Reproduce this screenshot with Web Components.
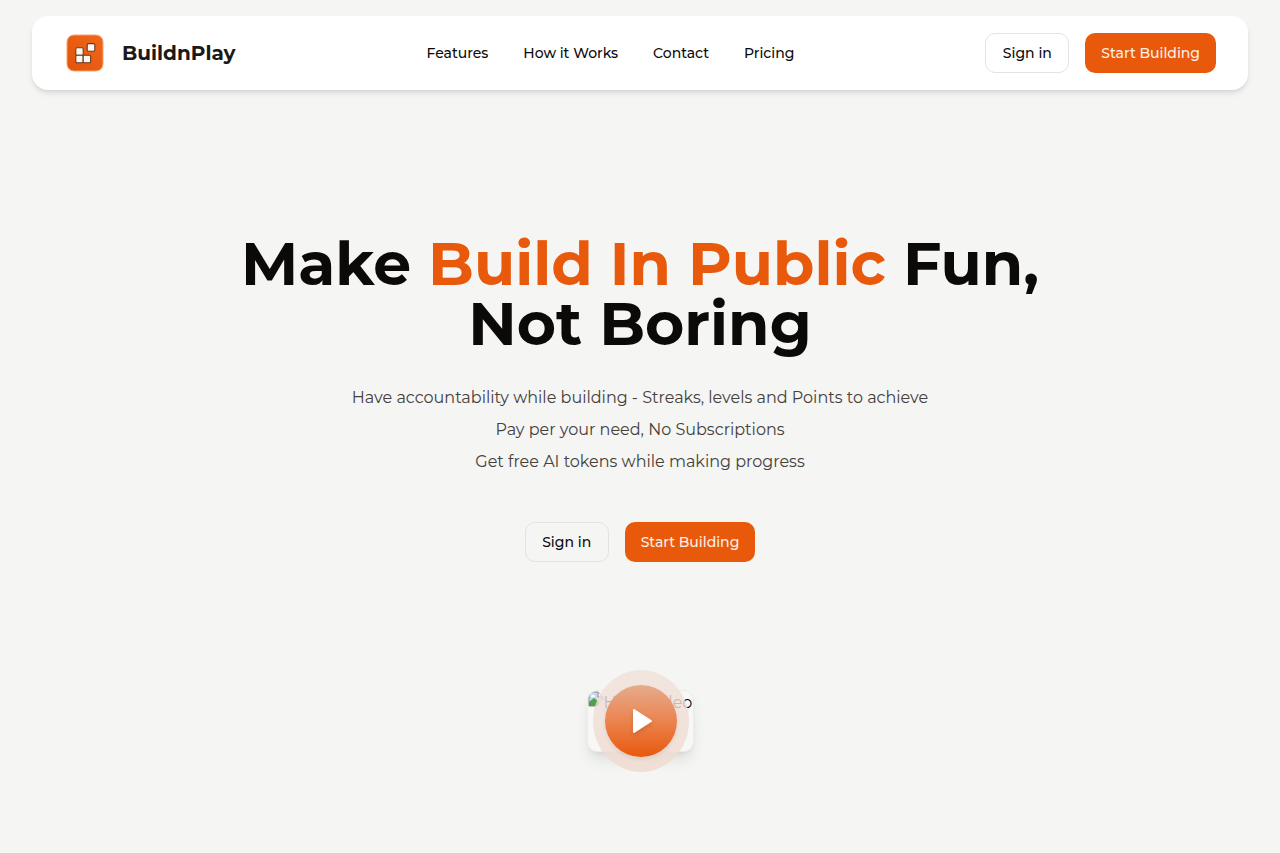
<!DOCTYPE html>
<html lang="en">
<head>
<meta charset="utf-8">
<meta name="viewport" content="width=device-width, initial-scale=1">
<title>BuildnPlay</title>
<style>
  body {
    margin: 0;
    background: #f5f5f3;
    color: #0c0a09;
    font-family: Montserrat, Inter, "Open Sans", sans-serif;
    font-size: 16px;
    line-height: 24px;
    --primary: #e8590c;
    --border: #e4e3e2;
  }
</style>
</head>
<body>
<landing-page></landing-page>

<template id="landing-page">
  <style>
    :host { display: block; }
  </style>
  <site-header>
    <nav-link href="#features">Features</nav-link>
    <nav-link href="#how">How it Works</nav-link>
    <nav-link href="#contact">Contact</nav-link>
    <nav-link href="#pricing">Pricing</nav-link>
  </site-header>
  <main>
    <hero-section></hero-section>
  </main>
</template>

<template id="site-header">
  <style>
    :host { display: block; padding: 16px 32px 0; }
    header {
      display: flex; align-items: center; justify-content: space-between;
      padding: 16px 32px; background: #fff; border-radius: 16px;
      box-shadow: 0 4px 6px -1px rgb(0 0 0 / .1), 0 2px 4px -2px rgb(0 0 0 / .1);
    }
    nav { display: flex; gap: 35px; }
  </style>
  <header>
    <brand-logo></brand-logo>
    <nav aria-label="Main"><slot></slot></nav>
    <action-buttons></action-buttons>
  </header>
</template>

<template id="brand-logo">
  <style>
    :host { display: block; }
    a { display: flex; align-items: center; gap: 16px; color: #1c1917; text-decoration: none; font-size: 20px; line-height: 28px; font-weight: 700; }
    svg { display: block; width: 42px; height: 42px; }
  </style>
  <a href="#home">
    <svg viewBox="0 0 42 42" aria-hidden="true">
      <defs><linearGradient id="g" x1="1" y1="0" x2="0" y2="1"><stop offset="0" stop-color="#f0681a"/><stop offset="1" stop-color="#e2530b"/></linearGradient></defs>
      <rect x="3" y="3" width="36" height="36" rx="7" fill="url(#g)" stroke="#f9a36c"/>
      <g fill="#fbf7f2" stroke="#71371a" stroke-width="1.1">
        <rect x="11.8" y="15.8" width="7.4" height="7.5" rx="1"/>
        <rect x="11.8" y="23.3" width="7.4" height="7.4" rx="1"/>
        <rect x="19.2" y="23.3" width="7.4" height="7.4" rx="1"/>
        <rect x="23.2" y="11.6" width="7.6" height="7.6" rx="1.2"/>
      </g>
    </svg>
    <span>BuildnPlay</span>
  </a>
</template>

<template id="nav-link">
  <style>
    :host { display: block; }
    a { display: block; color: #0c0a09; text-decoration: none; font-size: 14px; line-height: 20px; font-weight: 500; white-space: nowrap; }
  </style>
  <a><slot></slot></a>
</template>

<template id="action-buttons">
  <style>
    :host { display: flex; gap: 16px; justify-content: center; }
  </style>
  <app-button>Sign in</app-button>
  <app-button variant="primary">Start Building</app-button>
</template>

<template id="app-button">
  <style>
    :host { display: block; }
    button {
      box-sizing: border-box; min-width: 84px; height: 40px; padding: 0 16px; cursor: pointer;
      font: inherit; font-size: 14px; line-height: 20px; font-weight: 500; color: #0c0a09;
      background: transparent; border: 1px solid var(--border); border-radius: 10px; white-space: nowrap;
    }
    :host([variant="primary"]) button { background: var(--primary); border: 0; color: #fdf0e6; }
  </style>
  <button type="button"><slot></slot></button>
</template>

<template id="hero-section">
  <style>
    :host { display: flex; flex-direction: column; align-items: center; padding: 144px 32px 96px; text-align: center; }
    h1 { margin: 0; max-width: 900px; font-size: 60px; line-height: 60px; font-weight: 700; }
    em { font-style: normal; color: var(--primary); }
    .copy { margin: 28px 0 44px; color: #44403c; font-size: 16px; line-height: 32px; }
    p { margin: 0; }
    hero-video { margin-top: 128px; }
  </style>
  <h1>Make <em>Build In Public</em> Fun,<br>Not Boring</h1>
  <div class="copy">
    <p>Have accountability while building - Streaks, levels and Points to achieve</p>
    <p>Pay per your need, No Subscriptions</p>
    <p>Get free AI tokens while making progress</p>
  </div>
  <action-buttons></action-buttons>
  <hero-video></hero-video>
</template>

<template id="hero-video">
  <style>
    :host { display: block; position: relative; }
    .poster {
      box-sizing: border-box; display: flex; align-items: flex-start; width: 107px; height: 62px; overflow: hidden;
      border: 1px solid #ececeb; border-radius: 10px; background: #f7f7f6; white-space: nowrap;
      box-shadow: 0 10px 15px -3px rgb(0 0 0 / .1), 0 4px 6px -4px rgb(0 0 0 / .1);
    }
    .poster svg { flex: none; width: 16px; height: 16px; }
    button {
      position: absolute; inset: -20px 5px -20px 6px; display: grid; place-items: center; padding: 0; cursor: pointer;
      border: 0; border-radius: 50%; background: linear-gradient(rgb(240 226 218 / .8), rgb(240 219 208 / .85));
    }
    .disc {
      display: grid; place-items: center; width: 72px; height: 72px; border-radius: 50%;
      background: linear-gradient(#e6ab8c, #eb8856 45%, #e8590c);
      box-shadow: 0 2px 4px rgb(0 0 0 / .08);
    }
    .disc svg { width: 32px; height: 32px; filter: drop-shadow(0 2px 2px rgb(0 0 0 / .15)); }
  </style>
  <div class="poster">
    <svg viewBox="0 0 16 16" aria-hidden="true">
      <path d="M1 1h9l5 5v9H1z" fill="#c7d9ef" stroke="#8b8b8b"/>
      <path d="M1 15v-4l5-4 5 4v4z" fill="#4fa147"/>
      <path d="M3 6c0-3 4-3 4 0z" fill="#fff"/>
      <path d="M10 1v5h5" fill="#f6f6f6" stroke="#8b8b8b"/>
      <path d="M8 16l8-8v8z" fill="#f5f5f3"/>
    </svg>
    <span>Hero Video</span>
  </div>
  <button type="button" aria-label="Play video">
    <span class="disc"><svg viewBox="0 0 32 32" aria-hidden="true"><path d="M9 5v22L26 16z" fill="#fff" stroke="#fff" stroke-width="2" stroke-linejoin="round"/></svg></span>
  </button>
</template>

<script>
  class TemplateElement extends HTMLElement {
    constructor() {
      super();
      const template = document.getElementById(this.localName);
      this.attachShadow({ mode: "open" }).append(template.content.cloneNode(true));
    }
  }
  class NavLink extends TemplateElement {
    connectedCallback() {
      this.shadowRoot.querySelector("a").href = this.getAttribute("href");
    }
  }
  customElements.define("nav-link", NavLink);
  for (const name of ["app-button", "action-buttons", "brand-logo", "hero-video", "site-header", "hero-section", "landing-page"]) {
    customElements.define(name, class extends TemplateElement {});
  }
</script>
</body>
</html>
